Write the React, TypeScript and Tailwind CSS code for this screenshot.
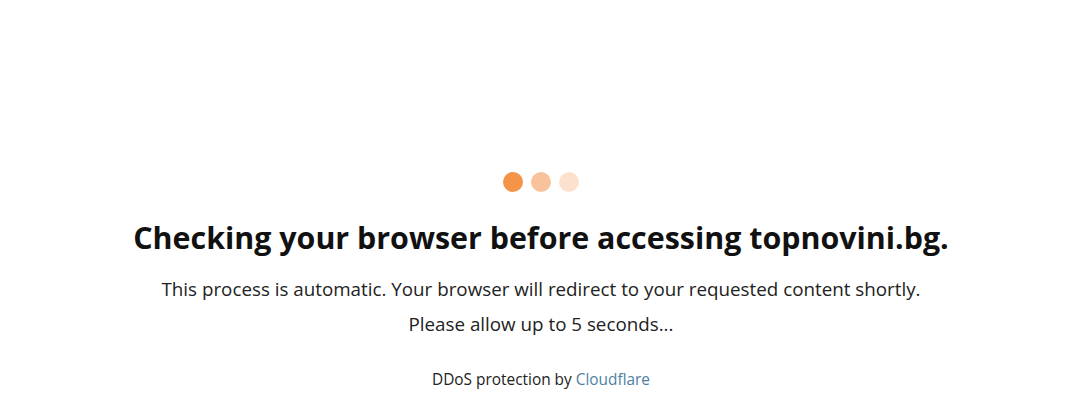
export default function App() {
  return (
    <div className="w-full h-[401px] bg-white flex flex-col items-center text-center font-['Open_Sans',sans-serif] pt-[172px] pl-4">
      {/* loading dots */}
      <div className="flex gap-2">
        <span className="w-5 h-5 rounded-full bg-[#f39448]" />
        <span className="w-5 h-5 rounded-full bg-[#f8c39b]" />
        <span className="w-5 h-5 rounded-full bg-[#fce2ce]" />
      </div>

      <h1 className="mt-[26px] text-[30.4px] leading-[40px] font-bold text-[#111]">
        Checking your browser before accessing topnovini.bg.
      </h1>

      <p className="mt-[14px] text-[18.8px] leading-[35px] text-[#222]">
        This process is automatic. Your browser will redirect to your requested content shortly.
      </p>
      <p className="text-[18.8px] leading-[35px] text-[#222]">
        Please allow up to 5 seconds...
      </p>

      <p className="mt-[28px] text-[15.4px] leading-[20px] text-[#222]">
        DDoS protection by{" "}
        <a href="#" className="text-[#4d7fa3]">
          Cloudflare
        </a>
      </p>
    </div>
  );
}
